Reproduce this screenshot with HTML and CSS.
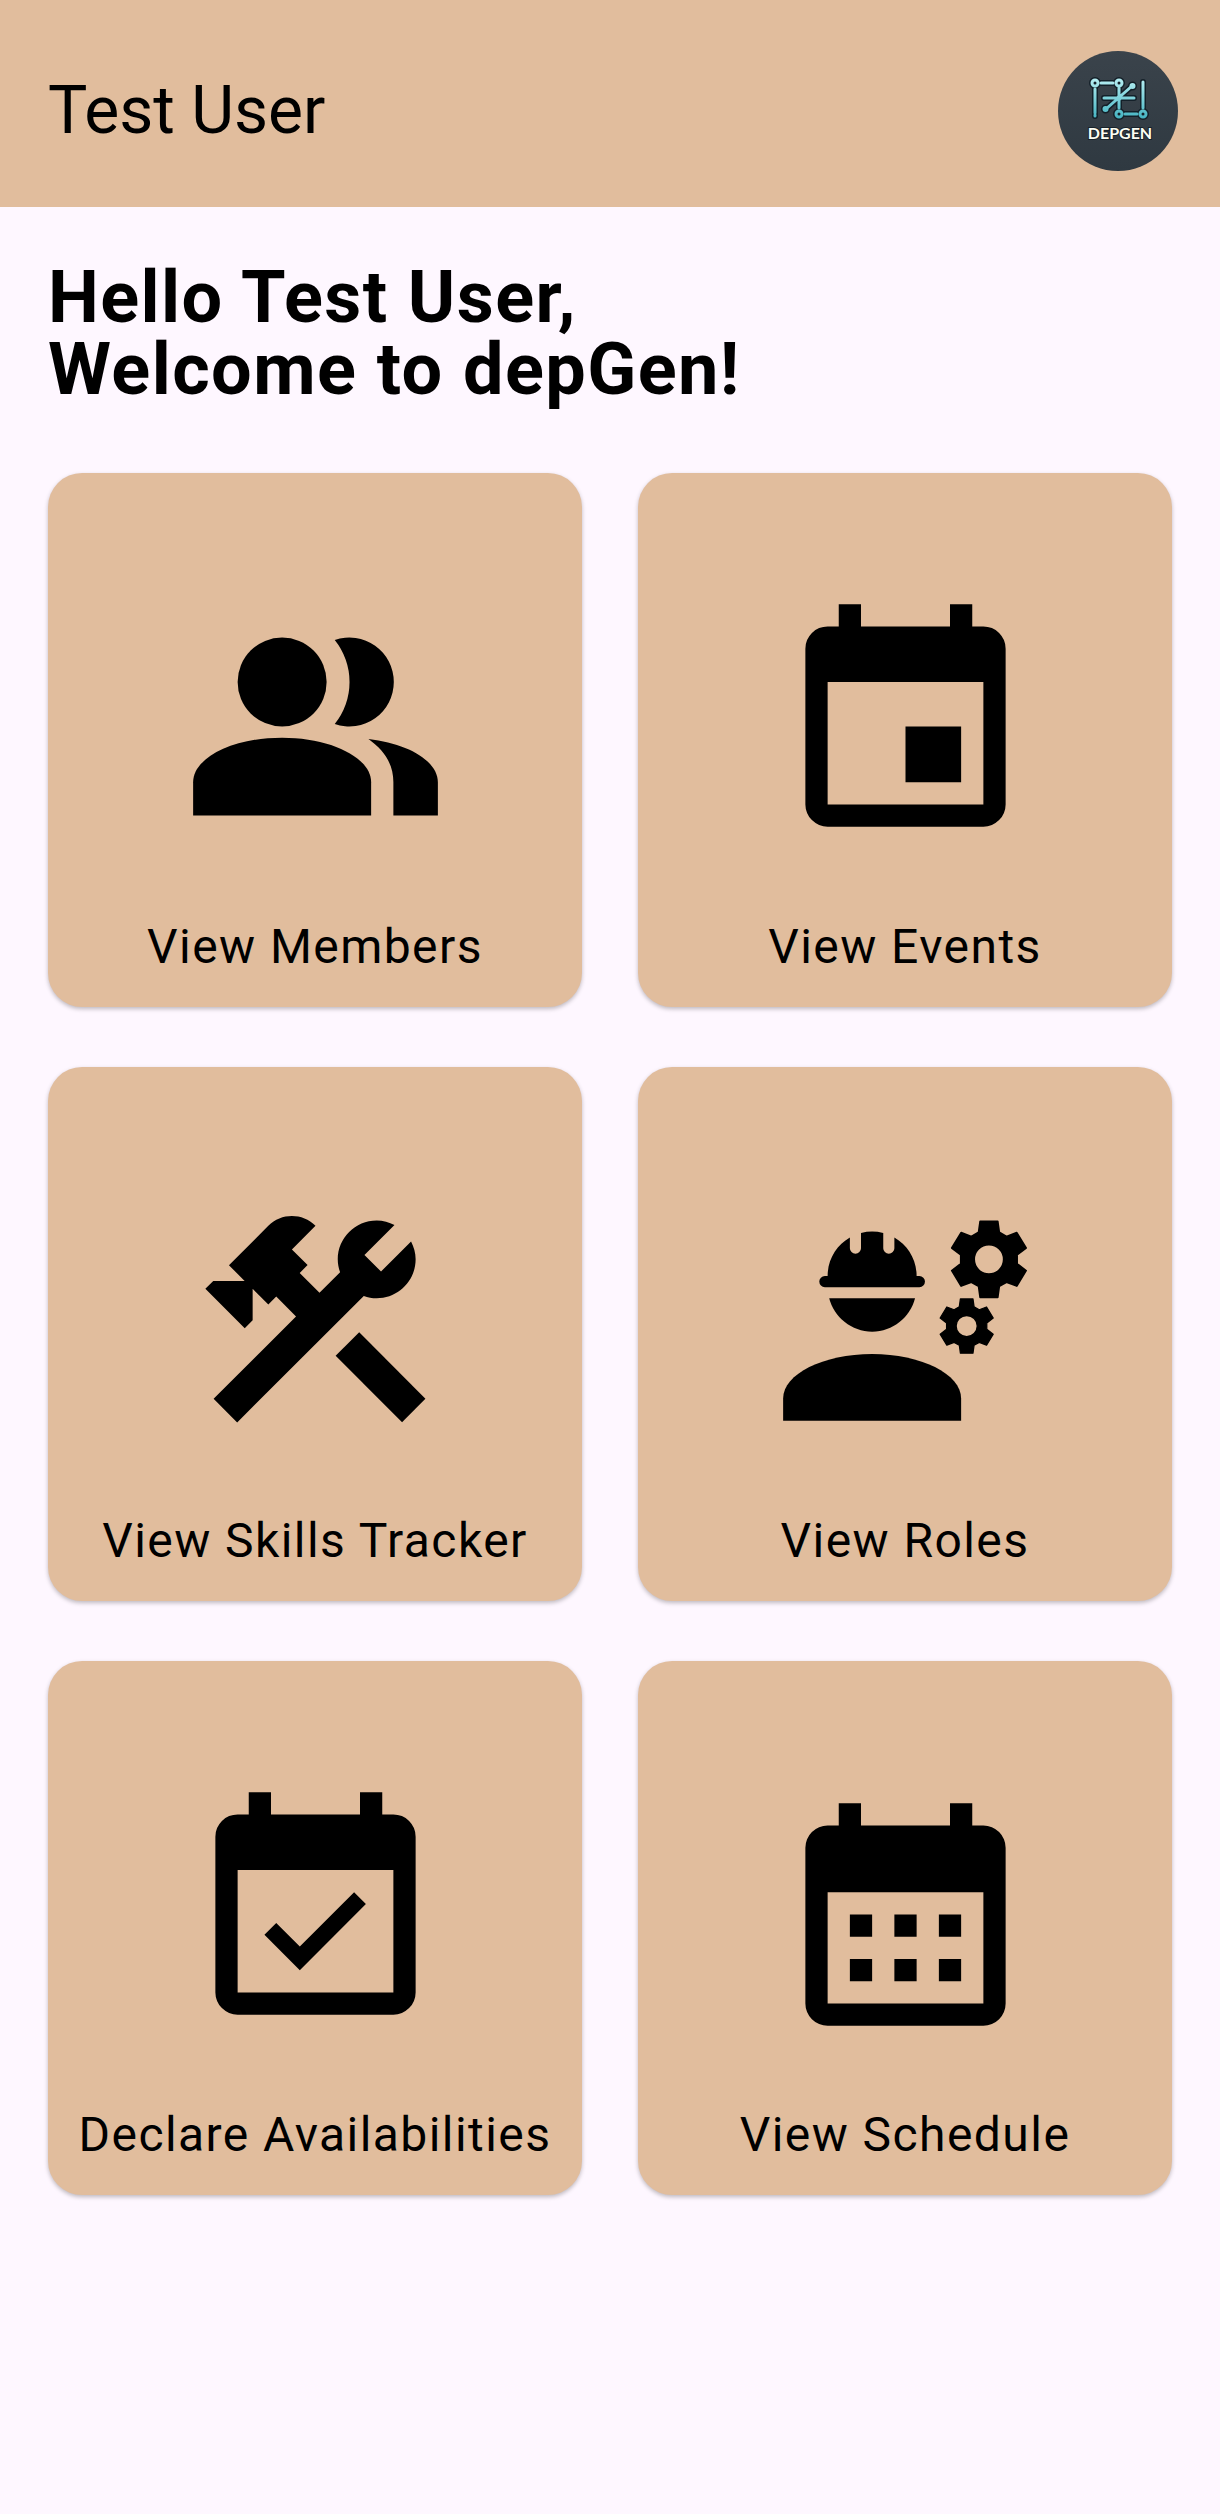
FILE: index.html
```html
<!DOCTYPE html>
<html lang="en">
<head>
<meta charset="utf-8">
<meta name="viewport" content="width=device-width, initial-scale=1">
<title>depGen</title>
<link rel="stylesheet" href="styles.css">
</head>
<body>
<header class="topbar">
  <span class="topbar-title">Test User</span>
  <a class="avatar" href="#profile" aria-label="Profile">
    <svg viewBox="0 0 120 120">
      <defs>
        <linearGradient id="teal" gradientUnits="userSpaceOnUse" x1="0" y1="28" x2="0" y2="68">
          <stop offset="0" stop-color="#b5eef2"/>
          <stop offset="1" stop-color="#43b3c1"/>
        </linearGradient>
        <linearGradient id="slate" x1="0" y1="0" x2="0" y2="1">
          <stop offset="0" stop-color="#3a434b"/>
          <stop offset="1" stop-color="#2f3941"/>
        </linearGradient>
        <g id="circuit">
          <path d="M43 32h12M37 38v24M61 37v20M46 47h30M48 58l26-23M67 63h12M85 31v26"/>
          <circle cx="37" cy="32" r="3"/>
          <circle cx="61" cy="32" r="3"/>
          <circle cx="61" cy="63" r="3"/>
          <circle cx="85" cy="63" r="3"/>
          <circle cx="74.500" cy="35" r="1.500"/>
          <circle cx="47.500" cy="58" r="1.500"/>
          <circle cx="61" cy="47" r="1"/>
          <path d="M37 64v1"/>
        </g>
      </defs>
      <circle cx="60" cy="60" r="60" fill="url(#slate)"/>
      <use href="#circuit" class="circuit-edge"/>
      <use href="#circuit" class="circuit-line"/>
      <text class="logo-text" x="62" y="88">DEPGEN</text>
    </svg>
  </a>
</header>

<main class="content">
  <h1 class="greeting">Hello Test User,<br>Welcome to depGen!</h1>
  <nav class="grid" aria-label="Sections">
    <a class="card" href="#members">
      <svg class="icon" viewBox="0 0 24 24" aria-hidden="true">
        <circle cx="9" cy="8" r="4"/>
        <path d="M1 17C1 14.8 4.6 13 9 13s8 1.8 8 4v3H1z"/>
        <path d="M13.73 4.22A4 4 0 1 1 13.73 11.78A6.04 6.04 0 0 0 13.73 4.22z"/>
        <path d="M16.76 13.13C18.1 14.1 19 15.3 19 17v3h4v-3c0-1.9-2.7-3.47-6.24-3.87z"/>
      </svg>
      <span class="label">View Members</span>
    </a>
    <a class="card" href="#events">
      <svg class="icon" viewBox="0 0 24 24" aria-hidden="true">
        <path d="M17 12h-5v5h5zM16 1v2H8V1H6v2H5a2 2 0 0 0-2 2v14a2 2 0 0 0 2 2h14a2 2 0 0 0 2-2V5a2 2 0 0 0-2-2h-1V1zM19 19H5V8h14z"/>
      </svg>
      <span class="label">View Events</span>
    </a>
    <a class="card" href="#skills">
      <svg class="icon" viewBox="0 0 24 24" aria-hidden="true">
        <path d="M15.93 13.05l5.95 5.98-2.1 2.12-5.97-5.98z"/>
        <path d="M17.5 10c1.93 0 3.5-1.57 3.5-3.5 0-.58-.16-1.12-.41-1.6l-2.7 2.7L16.4 6.11l2.7-2.7C18.62 3.16 18.08 3 17.5 3 15.57 3 14 4.57 14 6.5c0 .41.08.8.21 1.16l-1.85 1.85-1.78-1.78.71-.71-1.41-1.41L12 3.49c-1.17-1.17-3.07-1.17-4.24 0L4.22 7.03l1.41 1.41H2.81l-.71.71 3.54 3.54.71-.71V9.15l1.41 1.41.71-.71 1.78 1.78-7.41 7.41 2.12 2.12L16.34 9.79c.36.13.75.21 1.16.21z"/>
      </svg>
      <span class="label">View Skills Tracker</span>
    </a>
    <a class="card" href="#roles">
      <svg class="icon" viewBox="0 0 24 24" aria-hidden="true">
        <defs>
          <path id="gear" fill-rule="evenodd" d="M-.79-3.42H.79L.93-2.42 1.58-2.05 2.5-2.4 3.34-1.02 2.53-.4V.4L3.34 1.02 2.5 2.4 1.58 2.05.93 2.42.79 3.42H-.79L-.93 2.42-1.58 2.05-2.5 2.4-3.34 1.02-2.53.4V-.4L-3.34-1.02-2.5-2.4-1.58-2.05-.93-2.42zM0-1.33a1.33 1.33 0 1 0 0 2.66 1.33 1.33 0 0 0 0-2.66z"/>
        </defs>
        <path d="M1 19C1 16.8 4.6 15 9 15s8 1.8 8 4v2H1z"/>
        <path d="M9 13c1.86 0 3.41-1.28 3.86-3H5.14c.45 1.72 2 3 3.86 3z"/>
        <path d="M4.75 9a.5.5 0 0 1 0-1H5C5 6.52 5.8 5.23 7 4.54V5.5a.5.5 0 0 0 1 0V4.13a4 4 0 0 1 2 0V5.5a.5.5 0 0 0 1 0V4.54C12.2 5.23 13 6.52 13 8h.25a.5.5 0 0 1 0 1z"/>
        <use href="#gear" class="gear" transform="translate(19.5 6.5)"/>
        <use href="#gear" class="gear" transform="translate(17.5 12.5) scale(.714)"/>
      </svg>
      <span class="label">View Roles</span>
    </a>
    <a class="card" href="#availabilities">
      <svg class="icon" viewBox="0 0 24 24" aria-hidden="true">
        <path d="M16.53 11.06L15.47 10l-4.88 4.88-2.12-2.12-1.06 1.06L10.59 17zM16 1v2H8V1H6v2H5a2 2 0 0 0-2 2v14a2 2 0 0 0 2 2h14a2 2 0 0 0 2-2V5a2 2 0 0 0-2-2h-1V1zM19 19H5V8h14z"/>
      </svg>
      <span class="label">Declare Availabilities</span>
    </a>
    <a class="card" href="#schedule">
      <svg class="icon" viewBox="0 0 24 24" aria-hidden="true">
        <path d="M16 2v2H8V2H6v2H5a2 2 0 0 0-2 2v14a2 2 0 0 0 2 2h14a2 2 0 0 0 2-2V6a2 2 0 0 0-2-2h-1V2zM19 20H5V10h14z"/>
        <path d="M7 12h2v2H7zM11 12h2v2h-2zM15 12h2v2h-2zM7 16h2v2H7zM11 16h2v2h-2zM15 16h2v2h-2z"/>
      </svg>
      <span class="label">View Schedule</span>
    </a>
  </nav>
</main>
</body>
</html>
```

FILE: styles.css
```css
* {
  box-sizing: border-box;
}

body {
  margin: 0;
  min-height: 100vh;
  background: #fef7ff;
  color: #000;
  font-family: Roboto, sans-serif;
}

.topbar {
  display: flex;
  align-items: center;
  justify-content: space-between;
  padding: 51px 42px 36px 48px;
  background: #e1bd9d;
}

.topbar-title {
  font-size: 66px;
  line-height: 76px;
}

.avatar,
.avatar svg {
  display: block;
  width: 120px;
  height: 120px;
}

.circuit-edge,
.circuit-line {
  fill: none;
  stroke-linecap: round;
}

.circuit-edge {
  stroke: #142029;
  stroke-width: 6px;
}

.circuit-line {
  stroke: url(#teal);
  stroke-width: 3px;
}

.logo-text {
  fill: #fbfdf3;
  stroke: #18232b;
  stroke-width: 2px;
  paint-order: stroke;
  font-family: Lato, sans-serif;
  font-size: 16px;
  font-weight: 700;
  text-anchor: middle;
}

.content {
  padding: 55px 48px 64px;
}

/* Tracking is half a scaled pixel at both text sizes. */
.greeting {
  margin: 0 0 67px;
  font-size: 72px;
  font-weight: 700;
  line-height: 72px;
  letter-spacing: 0.02em;
}

.grid {
  display: grid;
  grid-template-columns: 1fr 1fr;
  gap: 60px 56px;
}

.card {
  display: flex;
  flex-direction: column;
  align-items: center;
  justify-content: flex-end;
  gap: 55px;
  aspect-ratio: 1;
  padding-bottom: 28px;
  border-radius: 34px;
  background: #e1bd9d;
  box-shadow: 0 2px 4px rgba(0, 0, 0, 0.25);
  color: inherit;
  text-decoration: none;
}

.icon {
  width: 50%;
  aspect-ratio: 1;
}

.gear {
  stroke: #000;
  stroke-width: 0.16;
  stroke-linejoin: round;
}

.label {
  font-size: 48px;
  line-height: 64px;
  letter-spacing: 0.03em;
  white-space: nowrap;
}
```
